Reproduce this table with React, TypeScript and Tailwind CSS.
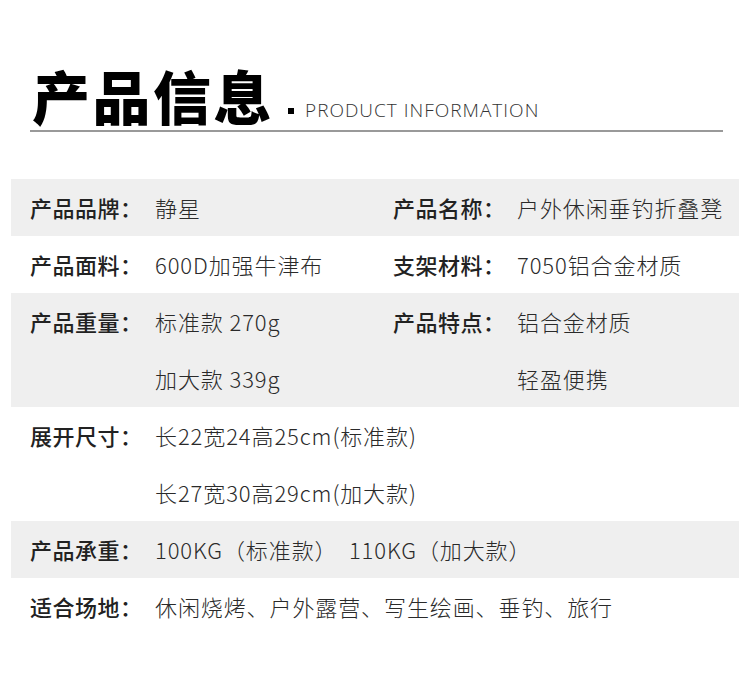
const cjk = { fontFamily: '"Noto Sans CJK SC", "Noto Sans", sans-serif' };

type Cell = { label: string; lines: string[] };

function Field({ cell, labelW }: { cell: Cell; labelW: string }) {
  return (
    <div className="flex">
      <div className={`${labelW} shrink-0 h-[57px] flex items-center text-[22px] font-medium tracking-[0.5px] text-[#222]`}>
        {cell.label}
      </div>
      <div className="flex flex-col">
        {cell.lines.map((l, i) => (
          <div key={i} className="h-[57px] flex items-center text-[22px] font-light tracking-[0.9px] text-[#2a2a2a] whitespace-pre">
            {l}
          </div>
        ))}
      </div>
    </div>
  );
}

const rows: { gray: boolean; left: Cell; right?: Cell }[] = [
  {
    gray: true,
    left: { label: "产品品牌：", lines: ["静星"] },
    right: { label: "产品名称：", lines: ["户外休闲垂钓折叠凳"] },
  },
  {
    gray: false,
    left: { label: "产品面料：", lines: ["600D加强牛津布"] },
    right: { label: "支架材料：", lines: ["7050铝合金材质"] },
  },
  {
    gray: true,
    left: { label: "产品重量：", lines: ["标准款 270g", "加大款 339g"] },
    right: { label: "产品特点：", lines: ["铝合金材质", "轻盈便携"] },
  },
  {
    gray: false,
    left: { label: "展开尺寸：", lines: ["长22宽24高25cm(标准款)", "长27宽30高29cm(加大款)"] },
  },
  {
    gray: true,
    left: { label: "产品承重：", lines: ["100KG（标准款）  110KG（加大款）"] },
  },
  {
    gray: false,
    left: { label: "适合场地：", lines: ["休闲烧烤、户外露营、写生绘画、垂钓、旅行"] },
  },
];

export default function App() {
  return (
    <div className="w-[750px] h-[679px] bg-white overflow-hidden" style={cjk}>
      {/* header */}
      <div className="pt-[66px] pl-[32px] flex items-end">
        <h1 className="text-[58px] leading-none font-black text-black tracking-[2.5px]">产品信息</h1>
        <span className="w-[6px] h-[6px] bg-black ml-[14px] mb-[10px]" />
        <span
          className="ml-[11px] mb-[4px] text-[19px] leading-none font-light tracking-[1px] text-[#333]"
          style={{ fontFamily: '"Open Sans", "Noto Sans", sans-serif' }}
        >
          PRODUCT INFORMATION
        </span>
      </div>
      <div className="mt-[6px] ml-[30px] w-[693px] h-[2px] bg-[#999]" />

      {/* spec rows */}
      <div className="mt-[47px] mx-[11px]">
        {rows.map((r, i) => (
          <div key={i} className={`flex pl-[19px] ${r.gray ? "bg-[#efefef]" : ""}`}>
            <div className="w-[363px] shrink-0">
              <Field cell={r.left} labelW="w-[125px]" />
            </div>
            {r.right && <Field cell={r.right} labelW="w-[124px]" />}
          </div>
        ))}
      </div>
    </div>
  );
}
